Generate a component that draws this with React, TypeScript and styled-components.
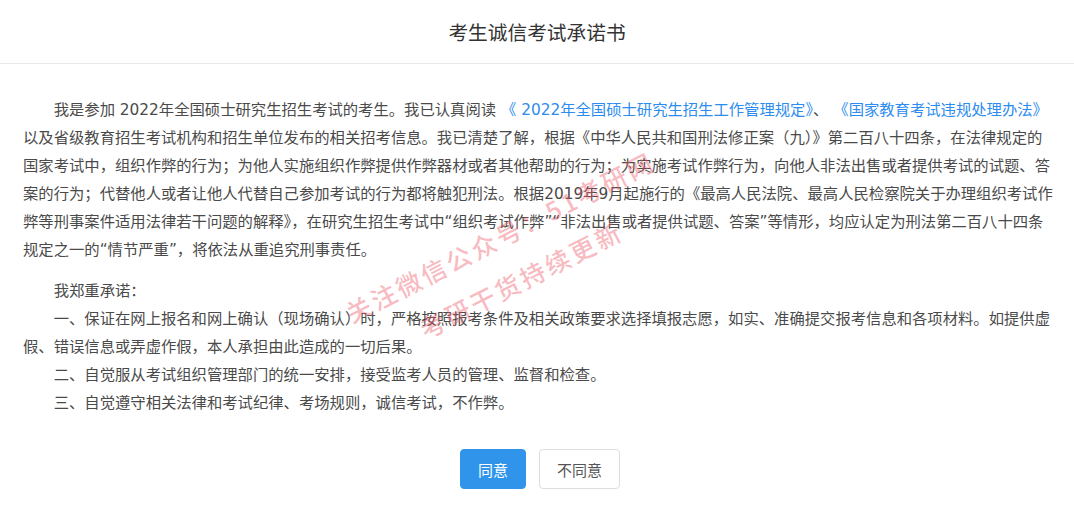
import React from 'react';
import styled, { createGlobalStyle } from 'styled-components';

const GlobalStyle = createGlobalStyle`
  html, body {
    margin: 0;
    padding: 0;
    background: #fff;
  }
  body {
    font-family: "DejaVu Sans", "Noto Sans CJK SC", sans-serif;
  }
`;

const Page = styled.div`
  position: relative;
  width: 1074px;
  min-height: 525px;
  overflow: hidden;
`;

const Header = styled.div`
  height: 63px;
  display: flex;
  align-items: center;
  justify-content: center;
  border-bottom: 1px solid #e8eaec;
  font-family: "Noto Sans CJK SC", sans-serif;
  font-size: 19.7px;
  color: #333;
`;

const Content = styled.div`
  padding: 32px 20px 0 23px;
  font-size: 15.33px;
  line-height: 28px;
  color: #4a4a4a;
`;

const Para = styled.p<{ $gap?: number }>`
  margin: ${(p) => p.$gap || 0}px 0 0;
  text-indent: 2em;
`;

const Link = styled.a`
  color: #2d8cf0;
  text-decoration: none;
  cursor: pointer;
`;

const Actions = styled.div`
  display: flex;
  justify-content: center;
  gap: 13px;
  margin-top: 32px;
  padding-left: 3px;
`;

const Button = styled.button<{ $primary?: boolean }>`
  height: 40px;
  padding: 0 17px;
  border-radius: 4px;
  border: 1px solid ${(p) => (p.$primary ? '#3095ea' : '#dcdee2')};
  background: ${(p) => (p.$primary ? '#3095ea' : '#fff')};
  color: ${(p) => (p.$primary ? '#fff' : '#555')};
  font-family: "Noto Sans CJK SC", sans-serif;
  font-size: 15px;
  cursor: pointer;
`;

const Watermark = styled.div<{ $x: number; $y: number }>`
  position: absolute;
  left: ${(p) => p.$x}px;
  top: ${(p) => p.$y}px;
  line-height: 30px;
  white-space: nowrap;
  transform-origin: left center;
  transform: rotate(-27deg);
  font-family: "Noto Sans CJK SC", sans-serif;
  font-size: 25px;
  font-weight: 500;
  letter-spacing: 3px;
  color: rgba(238, 90, 104, 0.42);
  pointer-events: none;
`;

function App() {
  return (
    <Page>
      <GlobalStyle />
      <Header>考生诚信考试承诺书</Header>
      <Content>
        <Para>
          我是参加 2022年全国硕士研究生招生考试的考生。我已认真阅读{' '}
          <Link>《 2022年全国硕士研究生招生工作管理规定》</Link>、{' '}
          <Link>《国家教育考试违规处理办法》</Link>
          以及省级教育招生考试机构和招生单位发布的相关招考信息。我已清楚了解，根据《中华人民共和国刑法修正案（九）》第二百八十四条，在法律规定的国家考试中，组织作弊的行为；为他人实施组织作弊提供作弊器材或者其他帮助的行为；为实施考试作弊行为，向他人非法出售或者提供考试的试题、答案的行为；代替他人或者让他人代替自己参加考试的行为都将触犯刑法。根据2019年9月起施行的《最高人民法院、最高人民检察院关于办理组织考试作弊等刑事案件适用法律若干问题的解释》，在研究生招生考试中“组织考试作弊”“非法出售或者提供试题、答案”等情形，均应认定为刑法第二百八十四条规定之一的“情节严重”，将依法从重追究刑事责任。
        </Para>
        <Para $gap={13}>我郑重承诺：</Para>
        <Para>
          一、保证在网上报名和网上确认（现场确认）时，严格按照报考条件及相关政策要求选择填报志愿，如实、准确提交报考信息和各项材料。如提供虚假、错误信息或弄虚作假，本人承担由此造成的一切后果。
        </Para>
        <Para>二、自觉服从考试组织管理部门的统一安排，接受监考人员的管理、监督和检查。</Para>
        <Para>三、自觉遵守相关法律和考试纪律、考场规则，诚信考试，不作弊。</Para>
        <Actions>
          <Button $primary>同意</Button>
          <Button>不同意</Button>
        </Actions>
      </Content>
      <Watermark $x={347} $y={299}>关注微信公众号：51考研网</Watermark>
      <Watermark $x={421} $y={315}>考研干货持续更新</Watermark>
    </Page>
  );
}

export default App;
